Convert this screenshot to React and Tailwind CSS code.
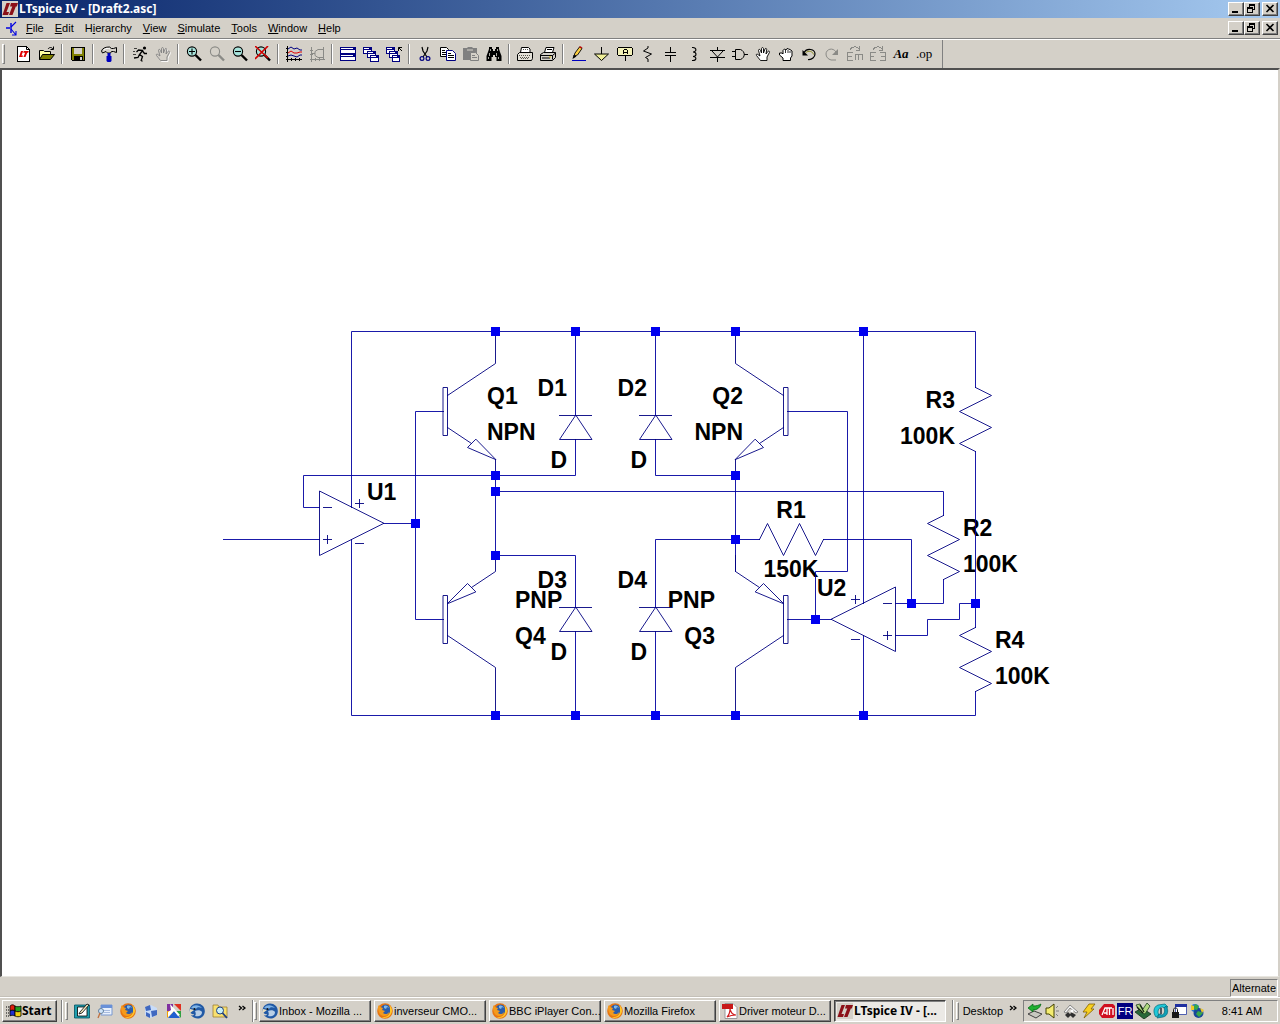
import React from 'react';

const Icon = ({ children, className = 'w-4 h-4' }) => (
  <svg viewBox="0 0 16 16" className={`${className} shrink-0`} fill="none" aria-hidden="true">
    {children}
  </svg>
);

const Lens = ({ stroke = '#000', glass = '#a8e4dc', children }) => (
  <Icon>
    <circle cx="6" cy="5.5" r="4.6" fill={glass} stroke={stroke} strokeWidth="1.1" />
    <path d="M9.500 9l5.500 5.500" stroke={stroke} strokeWidth="2.4" />
    {children}
  </Icon>
);

const Pane = ({ x, y, w = 8, h = 7 }) => (
  <g shapeRendering="crispEdges">
    <rect x={x} y={y} width={w} height={h} fill="#fff" />
    <rect x={x} y={y} width={w} height="3" fill="#000080" />
    <rect x={x + 1} y={y + 1} width={w - 4} height="1" fill="#fff" />
    <rect x={x + 0.5} y={y + 0.5} width={w - 1} height={h - 1} stroke="#000080" />
  </g>
);

const LtLogo = ({ className }) => (
  <Icon className={className}>
    <path d="M0 0h16v16H0z" fill="#d4d0c8" />
    <path d="M4.500 2H8L4.500 11H7l-1 3H.5z" fill="#8c1018" />
    <path d="M9 2h7l-1.200 3.500h-1L10.500 14H7l3.300-8.500H8z" fill="#8c1018" />
  </Icon>
);

const Firefox = () => (
  <Icon>
    <circle cx="8" cy="8" r="7.8" fill="#e87511" />
    <circle cx="8.600" cy="6.600" r="5.200" fill="#2a5cab" />
    <path d="M7 3c2-1 4 0 5 2l-2-1-1 2-2-1z" fill="#7fb7e8" />
    <path d="M1 4c0-1 1-2 1-2l1 2 3 1-1 2 3 1-2 2c2 2 5 1 6-1 0 3-3 4-5 4C3 13 1 9 1 4z" fill="#f49a1c" />
    <path d="M12 2c3 2 4 6 2 9-2 4-7 5-10 3 5 1 9-2 9-6 0-3 0-4-1-6z" fill="#ffc62b" />
  </Icon>
);

const Thunderbird = () => (
  <Icon>
    <path d="M1 5C3 0 10-1 14 3c3 4 2 9-1 11-4 3-9 1-11-2 2 1 3 0 3-1C2 12 0 9 1 5z" fill="#2159a5" />
    <path d="M2 5c3-4 8-3 11 0-3-1-5-1-6 1L2 5z" fill="#7eb3e6" />
    <path d="M6 8c2-1 6-1 7 1 0 4-4 5-7 4 1-1 1-3 0-5z" fill="#b9cfe6" />
    <path d="M1 6l4 1-4 3z" fill="#e9dfc0" />
    <circle cx="5.500" cy="6" r="1" fill="#111" />
  </Icon>
);

const Hand = ({ fill = '#fff', stroke = '#000' }) => (
  <path
    d="M5.500 14.500l-4-5c-.8-1.500.8-1.800 1.600-.8L5 10 3.500 4.500c0-1.500 1.500-1.500 2 0L6.500 7V2.500c.2-1.200 1.800-1.200 2 0V7l1.500-4c.6-1.200 2-.5 1.700.7L11 8l1.800-2.500c1-1 2.200 0 1.600 1L12 11v3.500z"
    fill={fill}
    stroke={stroke}
    strokeWidth=".9"
  />
);

const toolGroups = [
  [
    ['New Schematic', (
      <Icon>
        <path d="M1.500.5h9l3 3v12h-12z" fill="#fff" stroke="#000" shapeRendering="crispEdges" />
        <path d="M10.500.5v3h3" stroke="#000" />
        <path d="M5 5h2.200L5.500 9.500H7L6.500 11H3z" fill="#e00000" />
        <path d="M7.800 5h5l-.6 1.700h-1L9.500 11H7.500l1.600-4.300H7.200z" fill="#e00000" />
      </Icon>
    )],
    ['Open', (
      <Icon>
        <path d="M.5 13.500v-9h4l1 1h6v3" fill="#ffffa0" stroke="#000" />
        <path d="M.5 13.500l3-5h12l-4 5z" fill="#808000" stroke="#000" />
        <path d="M9 3c1.500-2 3.500-2 5 0M14.500.5v3h-3" stroke="#000" />
      </Icon>
    )],
  ],
  [
    ['Save', (
      <Icon>
        <path d="M1.500 1.500h13v13h-12l-1-1z" fill="#808000" stroke="#000" shapeRendering="crispEdges" />
        <path d="M4 2h8v6H4z" fill="#d4d0c8" />
        <path d="M4 10h9v5H4z" fill="#000" />
        <path d="M10 11h2v3h-2z" fill="#d4d0c8" />
      </Icon>
    )],
  ],
  [
    ['Control Panel', (
      <Icon>
        <path d="M.5 5c1-3 4-4 8-4l2 1.500h2l3-1v5l-3-1h-2L9.500 7h-3L5 5.500 1.500 7z" fill="#d4d0c8" stroke="#000" />
        <path d="M3 4c2-2 4-2 6-1" stroke="#fff" />
        <path d="M6.500 7h3v3h1v5l-1 1h-3l-1-1v-5h1z" fill="#0000c0" />
      </Icon>
    )],
  ],
  [
    ['Run', (
      <Icon>
        <circle cx="12.500" cy="2" r="1.600" fill="#000" />
        <path d="M11 4L7.500 8.500l3 2L9 15M7.500 8.500L6 11.500 2 12M10.500 4.500l-4-.5-2 2M10.500 5l2 2.500h2.500" stroke="#000" strokeWidth="1.300" />
        <path d="M2 2.500h3M1 5.500h2M1 8.500h3M9 15h2" stroke="#000" strokeWidth=".7" />
      </Icon>
    )],
    ['Halt', <Icon><g transform="translate(1 1)"><Hand fill="none" stroke="#fff" /></g><Hand fill="#d4d0c8" stroke="#808080" /></Icon>],
  ],
  [
    ['Zoom Area', <Lens><path d="M3 5.500h6M6 2.500v6" stroke="#000" strokeWidth="1.100" /></Lens>],
    ['Pan', <Lens stroke="#8a8a86" glass="#d4d0c8" />],
    ['Zoom Back', <Lens><path d="M3 5.500h6" stroke="#000" strokeWidth="1.100" /></Lens>],
    ['Zoom Full Extents', <Lens><path d="M0 0l13 12M13 0L0 13" stroke="#d00000" strokeWidth="1.600" /></Lens>],
  ],
  [
    ['Autorange', (
      <Icon>
        <path d="M1.500 0v16M0 13.500h16M0 2.500h2M0 6.500h2M0 10.500h2M5.500 12v3M9.500 12v3M13.500 12v3" stroke="#000" shapeRendering="crispEdges" />
        <path d="M2 3l3-2 3 2 3-1 3 2h2" stroke="#000080" />
        <path d="M2 7l3-2 3 2 3 0 3-1h2" stroke="#e00000" />
        <path d="M2 10l3-1 3 1 3 1 3-2h2" stroke="#000080" />
      </Icon>
    )],
    ['Setup', (
      <Icon>
        <path d="M2.500 1v15M1 13.500h15M1 4.500h3M1 8.500h3M6.500 12v3M10.500 12v3M14.500 1v12" stroke="#8a8a86" shapeRendering="crispEdges" />
        <path d="M14 3.500H9l-3 2v4l3 2h5M6 7.500H3" stroke="#8a8a86" />
      </Icon>
    )],
  ],
  [
    ['Tile', <Icon><Pane x={0} y={1} w={16} h={7} /><Pane x={0} y={8} w={16} h={7} /></Icon>],
    ['Cascade', <Icon><Pane x={0} y={1} w={9} /><Pane x={4} y={5} w={9} /><Pane x={7} y={9} w={9} /></Icon>],
    ['Close All', (
      <Icon>
        <Pane x={0} y={1} w={9} /><Pane x={3} y={5} w={9} /><Pane x={6} y={9} w={8} />
        <path d="M12.500 5V1.500H16M12.500 1.500L16 5" stroke="#000" />
      </Icon>
    )],
  ],
  [
    ['Cut', (
      <Icon>
        <path d="M5 1l1 4 4 6M11 1l-1 4-4 6" stroke="#000" strokeWidth="1.200" />
        <circle cx="5" cy="12.500" r="1.900" stroke="#000080" strokeWidth="1.200" />
        <circle cx="11" cy="12.500" r="1.900" stroke="#000080" strokeWidth="1.200" />
      </Icon>
    )],
    ['Copy', (
      <Icon>
        <path d="M.5 1.500h6l2 2v7h-8z" fill="#fff" stroke="#000" />
        <path d="M2 4.500h3M2 6.500h5M2 8.500h5" stroke="#000" />
        <path d="M6.500 4.500h6l3 3v7h-9z" fill="#fff" stroke="#000080" />
        <path d="M8 7.500h3M8 9.500h6M8 11.500h6" stroke="#000" />
      </Icon>
    )],
    ['Paste', (
      <Icon>
        <path d="M0 2h4l1-1h4l1 1h4v12H0z" fill="#808080" />
        <path d="M4 4h6" stroke="#d4d0c8" />
        <path d="M7.500 6.500h5l3 3v5h-8z" fill="#d4d0c8" stroke="#808080" />
        <path d="M9 9.500h3M9 11.500h5" stroke="#808080" />
      </Icon>
    )],
    ['Find', (
      <Icon>
        <path d="M3 1h3v2h1v2h2V3h1V1h3v2l1 3 1.500 4v5h-5v-4H9V9H7v2H5.500v4h-5v-5L2 6l1-3z" fill="#000" />
        <path d="M4.500 3v2M3.500 7v3M2.500 11v2M11.500 3v2M10.500 7v3M12.500 11v2" stroke="#a8a8a0" shapeRendering="crispEdges" />
      </Icon>
    )],
  ],
  [
    ['Print Setup', (
      <Icon>
        <path d="M3.500 6.500l1-5h7l1.500 1.500v3.500" fill="#fff" stroke="#000" />
        <path d="M.5 14.500v-6l2-2h13v6l-1 2z" fill="#e4e1d8" stroke="#000" />
        <path d="M2 9.500h12M3 11.500h10M4 12.500h8M6 3.500h5" stroke="#55534d" strokeDasharray="1 1" />
      </Icon>
    )],
    ['Print', (
      <Icon>
        <path d="M4.500 6.500l1.500-5h8l-1.500 5" fill="#fff" stroke="#000" />
        <path d="M.5 8.500l3-2h12v5l-3 3H.5z" fill="#d4d0c8" stroke="#000" />
        <path d="M1 9.500h11.500v4M12.500 9.500l3-2.500M2 12h8M7 3.500h5" stroke="#000" />
        <path d="M9 11h2" stroke="#e0c000" />
      </Icon>
    )],
  ],
  [
    ['Wire', (
      <Icon>
        <path d="M3 10l1-3 4.500-6 2.500 1.500L6.500 9z" fill="#ffd040" stroke="#000" strokeWidth=".9" />
        <path d="M1.500 13l1-4L5.500 10.500z" fill="#000" />
        <path d="M8 1l1-1 2.500 1.500-1 1z" fill="#c01010" />
        <path d="M1 14.500h14" stroke="#0000c0" shapeRendering="crispEdges" />
      </Icon>
    )],
    ['Ground', <Icon><path d="M7.500 1v7" stroke="#000" shapeRendering="crispEdges" /><path d="M.5 8h14l-7 6.500z" fill="#eeee98" stroke="#000" /></Icon>],
    ['Label Net', (
      <Icon>
        <path d="M1.500 1.500h13l1 1v6l-1 1h-13l-1-1v-6z" fill="#f4f2b8" stroke="#000" shapeRendering="crispEdges" />
        <path d="M8.500 10v5M6.500 8V4.500l1-1h2l1 1V8M6.500 6.500h4" stroke="#000" shapeRendering="crispEdges" />
      </Icon>
    )],
    ['Resistor', <Icon><path d="M8 0v2L3.500 5l8 3-6 3.500L8 13v3" stroke="#000" /></Icon>],
    ['Capacitor', <Icon><path d="M7.500 1v6M2 6.500h11M2 9.500h11M7.500 10v6" stroke="#000" shapeRendering="crispEdges" /></Icon>],
    ['Inductor', <Icon><path d="M6 1.500c5-.5 5 4.500 1 4.500 4 0 4 4.500 0 4.500 4 0 4 4.500-1 4" stroke="#000" strokeWidth="1.100" /></Icon>],
    ['Diode', <Icon><path d="M8.500 1v3M1 4.500h15M1 11.500h15M8.500 11v5" stroke="#000" shapeRendering="crispEdges" /><path d="M3 5l5.500 6L14 5" stroke="#000" /></Icon>],
    ['Component', <Icon><path d="M0 5.500h4M0 10.500h4M12 8.500h4" stroke="#000" shapeRendering="crispEdges" /><path d="M3.500 3.500h5c5 2 5 8 0 10h-5z" stroke="#000" /></Icon>],
    ['Move', <Icon><Hand /></Icon>],
    ['Drag', <Icon><path d="M5 14.500V12L1.500 9V7H4l1 1V4.500L6.500 3 8 4l1-1.500L10.500 3l1.500.5L14 5v5l-1.500 2v2.500z" fill="#fff" stroke="#000" /><path d="M7.500 4v3M10 4v3M12 5v2" stroke="#000" strokeWidth=".8" /></Icon>],
    ['Undo', <Icon><path d="M3 6.500c3-5 11-3.500 11 1.500 0 3-3 6-7 5.500" stroke="#000" strokeWidth="1.200" /><path d="M4.500 7c3-3 7-2 8 1.500" stroke="#808000" strokeWidth=".8" /><path d="M1.500 4v5.500H7z" fill="#000" /></Icon>],
    ['Redo', <Icon><path d="M12 6C9 1 2 3 2 8c0 3 2 5 5 6h5" stroke="#8a8a86" /><path d="M14 3v6H8z" fill="#8a8a86" /></Icon>],
    ['Rotate', (
      <Icon>
        <path d="M5.500 6.500h-5v8h5M1 10.500h4M8.500 14V8.500h6.500V14M11.500 9v5M3 4c2-4 7-4 9-1M12.500 0v4H9" stroke="#8a8a86" shapeRendering="crispEdges" />
      </Icon>
    )],
    ['Mirror', (
      <Icon>
        <path d="M5.500 6.500h-5v8h5M1 10.500h3M10 6.500h5v8h-5M15 10.500h-4M3 4c2-4 7-4 9-1M12.500 0v4H9" stroke="#8a8a86" shapeRendering="crispEdges" />
      </Icon>
    )],
    ['Text', <span className="w-4 font-['Liberation_Serif',serif] text-[13px] leading-4 font-bold italic">Aa</span>],
    ['SPICE Directive', <span className="w-4 font-['Liberation_Serif',serif] text-[13px] leading-3">.op</span>],
  ],
];

const menus = [
  ['', 'F', 'ile'], ['', 'E', 'dit'], ['H', 'i', 'erarchy'], ['', 'V', 'iew'],
  ['', 'S', 'imulate'], ['', 'T', 'ools'], ['', 'W', 'indow'], ['', 'H', 'elp'],
];

const raised = 'border border-t-white border-l-white border-r-[#404040] border-b-[#404040] shadow-[inset_-1px_-1px_0_#808080]';

function WindowButtons() {
  return (
    <div className="flex items-center pr-0.5">
      <button aria-label="Minimize" className={`w-4 h-3.5 bg-[#d4d0c8] ${raised}`}>
        <svg viewBox="0 0 14 12" className="w-3.5 h-3 block"><path d="M3 8h6v2H3z" fill="#000" /></svg>
      </button>
      <button aria-label="Restore" className={`w-4 h-3.5 bg-[#d4d0c8] ${raised}`}>
        <svg viewBox="0 0 14 12" className="w-3.5 h-3 block" fill="none" stroke="#000" shapeRendering="crispEdges">
          <path d="M4.500 4V1.500h5v5H8M4 2h6M2.500 4.500h5v5h-5zM2 5h6" />
        </svg>
      </button>
      <button aria-label="Close" className={`w-4 h-3.5 ml-0.5 bg-[#d4d0c8] ${raised}`}>
        <svg viewBox="0 0 14 12" className="w-3.5 h-3 block"><path d="M3.500 2l7 7M10.500 2l-7 7" stroke="#000" strokeWidth="1.600" /></svg>
      </button>
    </div>
  );
}

const Resistor = ({ x, y, flip }) => (
  <path
    transform={`translate(${x} ${y}) scale(${flip ? -1 : 1} 1)`}
    d="M0 0l16 8-32 16 32 16-32 16 16 8"
  />
);

const Diode = ({ x, y }) => (
  <path transform={`translate(${x} ${y})`} d="M-16 0h32M0 0l-16 24h32z" />
);

const Npn = () => (
  <path d="M443 387h4v48h-4zM495 331v32l-48 32M447 427l24 16M475 439l-8 8 28 12zM495 459v16" />
);

const Pnp = () => (
  <path d="M443 595h4v48h-4zM447 635l48 32v48M495 555v16l-24 16M447 603l20-20 8 8z" />
);

const nodes = [
  [495, 331], [575, 331], [655, 331], [735, 331], [863, 331],
  [495, 475], [735, 475], [495, 491], [415, 523], [735, 539], [495, 555],
  [911, 603], [975, 603], [815, 619],
  [495, 715], [575, 715], [655, 715], [735, 715], [863, 715],
];

const labels = [
  [487, 404, 'Q1'], [487, 440, 'NPN'], [567, 396, 'D1', 'end'], [567, 468, 'D', 'end'],
  [647, 396, 'D2', 'end'], [647, 468, 'D', 'end'], [743, 404, 'Q2', 'end'], [743, 440, 'NPN', 'end'],
  [955, 408, 'R3', 'end'], [955, 444, '100K', 'end'], [367, 500, 'U1'],
  [791, 518, 'R1', 'middle'], [791, 577, '150K', 'middle'], [817, 596, 'U2'],
  [963, 536, 'R2'], [963, 572, '100K'], [995, 648, 'R4'], [995, 684, '100K'],
  [567, 588, 'D3', 'end'], [515, 608, 'PNP'], [515, 644, 'Q4'], [567, 660, 'D', 'end'],
  [647, 588, 'D4', 'end'], [715, 608, 'PNP', 'end'], [715, 644, 'Q3', 'end'], [647, 660, 'D', 'end'],
];

function Schematic() {
  return (
    <svg viewBox="220 323 840 400" className="w-[840px] h-[400px] shrink-0" role="img" aria-label="Draft2.asc schematic">
      <g className="font-['Liberation_Sans',Arial,sans-serif] text-[23px] font-bold" fill="#000">
        {labels.map(([x, y, text, anchor], i) => (
          <text key={i} x={x} y={y} textAnchor={anchor || 'start'}>{text}</text>
        ))}
      </g>
      <g transform="translate(.5 .5)" fill="none" stroke="#0000a0" strokeWidth=".9" strokeLinecap="square" shapeRendering="crispEdges">
        {/* supply rails */}
        <path d="M351 507V331H975V387M351 539V715H975V691M863 331V603M863 635V715" />
        {/* left half of the bridge */}
        <path d="M223 539H319M319 507H303V475H575V439M383 523H415M443 411H415V619H443M495 475V555H575V607M575 331V415M575 631V715" />
        {/* right half of the bridge */}
        <path d="M655 331V415M655 439V475H735V571M735 539H655V607M655 631V715M787 411H847V571H815V619M787 619H831" />
        {/* feedback network */}
        <path d="M495 491H943V515M943 579V603H895M735 539H759M823 539H911V603M895 635H927V619H959V603H975M975 451V627" />
        <g stroke="#000080">
          <path d="M759 539l8-16 16 32 16-32 16 32 8-16" />
          <Resistor x={975} y={387} />
          <Resistor x={943} y={515} flip />
          <Resistor x={975} y={627} flip />
          <Npn />
          <Pnp />
          <g transform="translate(1230 0) scale(-1 1)">
            <Npn />
            <Pnp />
          </g>
          <Diode x={575} y={415} />
          <Diode x={655} y={415} />
          <Diode x={575} y={607} />
          <Diode x={655} y={607} />
          {/* op-amps */}
          <path d="M319 491v64l64-32zM323 507h8M323 539h8M327 535v8M355 503h8M359 499v8M355 543h8" />
          <path d="M895 587v64l-64-32zM883 603h8M883 635h8M887 631v8M851 599h8M855 595v8M851 639h8" />
        </g>
      </g>
      {nodes.map(([x, y]) => (
        <rect key={`${x}-${y}`} x={x - 4} y={y - 4} width="9" height="9" fill="#0000f0" />
      ))}
    </svg>
  );
}

const quickLaunch = [
  ['Show Desktop', (
    <Icon>
      <path d="M.5 2h15v13H.5z" fill="#20a0b0" stroke="#005060" strokeWidth=".8" />
      <path d="M3.500 4h9.500v9H3.500z" fill="#fff" stroke="#000" strokeWidth=".8" />
      <path d="M6 9l7-8 2 1-7 8-3 1z" fill="#f0e8c0" stroke="#000" strokeWidth=".8" />
    </Icon>
  )],
  ['Explorer', (
    <Icon>
      <path d="M4 2h11v10H4z" fill="#e8f0fc" stroke="#7898d0" />
      <path d="M4 2h11v3H4z" fill="#6890d8" />
      <path d="M6 7.500h7M7 9.500h6" stroke="#a8bce0" />
      <circle cx="4" cy="8" r="2.500" fill="#cfe4fa" stroke="#6080a0" />
      <path d="M3 10l-2 5" stroke="#c07040" strokeWidth="1.300" />
    </Icon>
  )],
  ['Mozilla Firefox', <Firefox />],
  ['VirtualBox', (
    <Icon>
      <path d="M2 5l6-3 6 3v7l-6 3-6-3z" fill="#c8dcf8" />
      <path d="M2 4l5-2 1 5-5 1zM8 8l6-1v5l-5 2zM3 9l4 2v4l-4-2z" fill="#4068c0" />
    </Icon>
  )],
  ['Picasa', (
    <Icon>
      <path d="M1 1h6v7H1z" fill="#8030a0" /><path d="M8 1h7v7z" fill="#e03020" />
      <path d="M1 8l7 0-7 7z" fill="#f0a000" /><path d="M9 8h6v7z" fill="#30a040" />
      <path d="M2 15l6-7 6 7z" fill="#2060d0" /><path d="M4 1l10 11-2 1L8 8l-6 6V9l3-2z" fill="#fff" />
    </Icon>
  )],
  ['Thunderbird', <Thunderbird />],
  ['Search', (
    <Icon>
      <path d="M1 2h5l1 2h8v10H1z" fill="#f8e070" stroke="#a08030" strokeWidth=".8" />
      <circle cx="8" cy="7.500" r="3.500" fill="#c8f0f8" stroke="#204080" />
      <path d="M10.500 10l4.500 5" stroke="#204080" strokeWidth="1.800" />
    </Icon>
  )],
];

const tasks = [
  ['Inbox - Mozilla ...', <Thunderbird />],
  ['inverseur CMO...', <Firefox />],
  ['BBC iPlayer Con...', <Firefox />],
  ['Mozilla Firefox', <Firefox />],
  ['Driver moteur D...', (
    <Icon>
      <path d="M3 .5h8l4 4v11H3z" fill="#fff" stroke="#999" />
      <path d="M0 1h11v5H0z" fill="#c81818" />
      <path d="M5 14c2-2 3-5 3-8 1 4 3 6 6 6-4 0-7 1-9 2z" stroke="#d02020" strokeWidth="1.200" />
    </Icon>
  )],
  ['LTspice IV - [...', <LtLogo />, true],
];

const trayIcons = [
  ['Safely Remove Hardware', (
    <Icon>
      <path d="M1 11l6-3 8 3-6 4z" fill="#c8c8c0" stroke="#404040" />
      <path d="M1 5l5-4v2c4 0 6-1 8-2-1 4-4 6-8 6v2z" fill="#20b030" stroke="#006010" strokeWidth=".7" />
    </Icon>
  )],
  ['Volume', (
    <Icon>
      <path d="M1 5h3l5-4v14l-5-4H1z" fill="#f4ec70" stroke="#404000" />
      <path d="M11 8h3M11 5l2-2M11 11l2 2" stroke="#808080" />
    </Icon>
  )],
  ['Updates', (
    <Icon>
      <path d="M1 9l6-7 8 7-2 1-6-5-4 5z" fill="#f4f4f4" stroke="#606060" strokeWidth=".7" />
      <path d="M2 12l3-3 3 3-3 3zM8 9l5 3-3 3-3-3z" fill="#303030" /><circle cx="9" cy="8" r="1.500" fill="#fff" />
    </Icon>
  )],
  ['Power', <Icon><path d="M8 1h6l-4 5h3L3 15l3-6H2z" fill="#f8d020" stroke="#806000" strokeWidth=".8" /></Icon>],
  ['ATI', (
    <Icon>
      <path d="M5 1h9l2 2v10l-2 2H3l-3-4V7z" fill="#d01020" />
      <path d="M3 12l3-7h2v7M5 10h3M8 5h5M10.500 5v7M14 5v7" stroke="#fff" strokeWidth="1.300" />
    </Icon>
  )],
  ['Language', <span className="flex w-4 h-4 items-center justify-center bg-[#000080] text-white">FR</span>],
  ['Sound Manager', (
    <Icon>
      <path d="M0 9l7-4 9 6-7 5z" fill="#286838" stroke="#103018" strokeWidth=".8" />
      <path d="M1 2l4-1 3 5 4-6 3 3-5 8-5-2z" fill="#b0d880" stroke="#204020" strokeWidth=".8" />
      <path d="M2 4l6 6M5 2l4 7" stroke="#102010" strokeWidth="1.200" />
    </Icon>
  )],
  ['Sync', (
    <Icon>
      <path d="M3 14C0 10 0 4 5 2l7-1 3 3-4 1-1-1C5 4 4 9 6 12z" fill="#20c8d8" stroke="#006878" strokeWidth=".7" />
      <path d="M13 3c3 4 2 10-3 11l-6 1 2-4 3 1c3-1 3-5 2-7z" fill="#10a0b8" stroke="#006878" strokeWidth=".7" />
      <path d="M8 5v6" stroke="#203040" strokeWidth="1.500" />
    </Icon>
  )],
  ['Secure Window', (
    <Icon>
      <path d="M4.500 1.500h11v10h-11z" fill="#fff" stroke="#5060b0" />
      <path d="M4 1h12v3H4z" fill="#2030a0" />
      <path d="M1 9h7v6H1z" fill="#181818" />
      <path d="M2.500 9V6.500c0-2 4-2 4 0V9" stroke="#181818" />
    </Icon>
  )],
  ['Network', (
    <Icon>
      <circle cx="6" cy="5" r="4" fill="#2878d0" /><circle cx="9.500" cy="10" r="5" fill="#184898" />
      <path d="M6 1l4 2-2 4-4-1zM9 8l5 2-4 4-3-3z" fill="#38a848" />
      <path d="M2 2l3 1v4H2zM11 5l4 2-2 3z" fill="#f0c828" />
    </Icon>
  )],
];

const Grip = () => <span className="w-[3px] self-stretch my-1 mr-1 border border-t-white border-l-white border-r-[#808080] border-b-[#808080]" />;
const Divider = () => <span className="w-0.5 self-stretch my-0.5 border-l border-r border-l-[#808080] border-r-white" />;

const Chevrons = () => (
  <svg viewBox="0 0 8 7" className="w-2 h-[7px] mx-auto mb-1.5" fill="none" stroke="#000" strokeWidth="1.300">
    <path d="M1 1l2.500 2L1 5M4.500 1L7 3 4.500 5" />
  </svg>
);

function Taskbar() {
  return (
    <footer className="flex items-center h-[27px] shrink-0 border-t border-white">
      <button className={`ml-0.5 flex items-center w-[55px] h-[22px] pl-[3px] text-xs font-bold whitespace-nowrap font-['Noto_Sans',sans-serif] ${raised}`}>
        <Icon>
          <path d="M4 3c2-2 4-1 5 0v5c-2-1-4-1-5 0z" fill="#e02010" stroke="#000" strokeWidth=".8" />
          <path d="M9 3c2 1 4 1 6 0v5c-2 1-4 1-6 0z" fill="#20a020" stroke="#000" strokeWidth=".8" />
          <path d="M4 8c2-1 4-1 5 0v5c-2-1-4-1-5 0z" fill="#2030d0" stroke="#000" strokeWidth=".8" />
          <path d="M9 8c2 1 4 1 6 0v5c-2 1-4 1-6 0z" fill="#f0d010" stroke="#000" strokeWidth=".8" />
          <path d="M0 4h3M0 7h3M0 10h3M0 13h3" stroke="#000" strokeDasharray="1 1" />
        </Icon>
        Start
      </button>
      <span className="w-1" />
      <Divider />
      <span className="w-0.5" />
      <Grip />
      <nav aria-label="Quick Launch" className="flex items-center gap-[7px] pl-0.5">
        {quickLaunch.map(([label, icon]) => (
          <button key={label} aria-label={label} className="flex">{icon}</button>
        ))}
      </nav>
      <button aria-label="More shortcuts" className="w-5 ml-1 h-5"><Chevrons /></button>
      <Divider />
      <Grip />
      <div className="flex flex-1 min-w-0 gap-[3px] -ml-0.5">
        {tasks.map(([label, icon, active]) => (
          <button
            key={label}
            className={`flex items-center flex-1 min-w-0 max-w-[112px] h-[22px] pl-0.5 gap-px whitespace-nowrap overflow-hidden ${
              active
                ? "text-xs font-bold bg-[#ebe9e5] font-['Noto_Sans',sans-serif] border border-t-[#404040] border-l-[#404040] border-r-white border-b-white shadow-[inset_1px_1px_0_#808080]"
                : raised
            }`}
          >
            {icon}
            <span>{label}</span>
          </button>
        ))}
      </div>
      <Divider />
      <span className="w-0.5" />
      <Grip />
      <button>Desktop</button>
      <button aria-label="More toolbars" className="w-5 h-5"><Chevrons /></button>
      <div className="flex items-center h-[22px] mr-0.5 pl-[3px] gap-0.5 border border-t-[#808080] border-l-[#808080] border-r-white border-b-white">
        {trayIcons.map(([label, icon]) => (
          <button key={label} aria-label={label} className="flex">{icon}</button>
        ))}
        <time className="w-[70px] text-center">8:41 AM</time>
      </div>
    </footer>
  );
}

export default function App() {
  return (
    <div className="flex flex-col h-screen min-w-0 overflow-hidden bg-[#d4d0c8] text-black text-[11px] leading-4 font-['Liberation_Sans',Arial,sans-serif]">
      <header className="flex items-center justify-between h-[18px] shrink-0 bg-linear-to-r from-[#0a246a] to-[#a6caf0]">
        <div className="flex items-center gap-px pl-0.5 text-white">
          <LtLogo className="w-4 h-4" />
          <h1 className="text-xs font-bold font-['Noto_Sans',sans-serif]">LTspice IV - [Draft2.asc]</h1>
        </div>
        <WindowButtons />
      </header>

      <div className="flex items-center justify-between h-5 shrink-0">
        <nav className="flex items-center pl-1 gap-px">
          <Icon>
            <path d="M2 8h4M7 3v10" stroke="#0000e0" strokeWidth="1.400" />
            <path d="M7 7l5-5M7 9l5 6M12 11v4H8" stroke="#0000e0" strokeWidth="1.100" />
          </Icon>
          {menus.map(([before, key, after]) => (
            <button key={key + after} className="px-[5px]">
              {before}<u>{key}</u>{after}
            </button>
          ))}
        </nav>
        <WindowButtons />
      </div>

      <div className="flex items-center h-[30px] shrink-0 border-t border-[#808080] shadow-[inset_0_1px_0_#fff]">
        <div role="toolbar" className="flex items-center self-stretch pl-0.5 border-r border-[#808080] pr-[7px] mt-px">
          <span className="w-[3px] h-5 mr-[7px] border border-t-white border-l-white border-r-[#808080] border-b-[#808080]" />
          {toolGroups.map((group, i) => (
            <React.Fragment key={i}>
              {i > 0 && <span className="w-0.5 h-5 mx-[3px] border-l border-r border-l-[#808080] border-r-white" />}
              {group.map(([label, icon]) => (
                <button key={label} aria-label={label} title={label} className="flex items-center w-[23px] h-5 pl-1 shrink-0">
                  {icon}
                </button>
              ))}
            </React.Fragment>
          ))}
        </div>
      </div>

      <main className="flex flex-1 min-h-0 items-center justify-center overflow-hidden bg-white border-t-2 border-l-2 border-t-[#505050] border-l-[#505050] border-r-2 border-r-[#d4d0c8] border-b border-b-[#e8e6e0]">
        <Schematic />
      </main>

      <div className="flex items-center justify-end h-5 shrink-0 pt-0.5 pr-0.5 border-b border-[#c4c0b8]">
        <span className="px-px border border-t-[#808080] border-l-[#808080] border-r-white border-b-white">Alternate</span>
      </div>

      <Taskbar />
    </div>
  );
}
